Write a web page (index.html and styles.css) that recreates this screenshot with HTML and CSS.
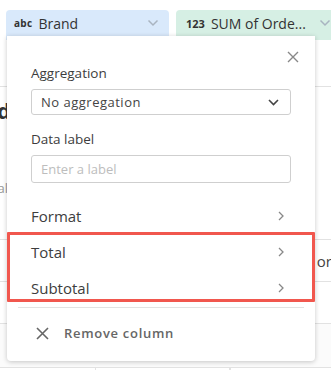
FILE: index.html
```html
<html><head><title>Column settings</title>
<link rel="stylesheet" href="styles.css">
</head>
<body>
<div class="sheet">
  <div class="columns-bar">
    <div class="pill pill-text">
      <span class="type-tag">abc</span>
      <span class="pill-name">Brand</span>
      <svg class="pill-caret" width="12" height="8" viewBox="0 0 12 8"><path d="M1.5 1.5 L6 6 L10.5 1.5" fill="none" stroke="#a9b4c0" stroke-width="1.5"/></svg>
    </div>
    <div class="pill pill-number">
      <span class="type-tag">123</span>
      <span class="pill-name">SUM of Orde...</span>
      <svg class="pill-caret" width="12" height="8" viewBox="0 0 12 8"><path d="M1.5 1.5 L6 6 L10.5 1.5" fill="none" stroke="#a9b4c0" stroke-width="1.5"/></svg>
    </div>
  </div>

  <div class="grid">
    <div class="row row-head"></div>
    <div class="row row-title">
      <span class="title-text">Brand</span>
      <span class="sub-text">Total</span>
    </div>
    <div class="row row-data">
      <div class="cell-end"><span>Vendor</span></div>
    </div>
    <div class="row row-data"></div>
    <div class="row row-data row-shade"></div>
    <div class="row row-cols">
      <div class="col"></div>
      <div class="col"></div>
      <div class="col"></div>
    </div>
  </div>

  <div class="popup">
    <button class="close-btn">
      <svg width="12" height="12" viewBox="0 0 12 12"><path d="M1 1 L11 11 M11 1 L1 11" stroke="#888" stroke-width="1.4"/></svg>
    </button>

    <div class="field">
      <div class="field-label">Aggregation</div>
      <div class="select-box">
        <span>No aggregation</span>
        <svg width="11" height="7" viewBox="0 0 11 7"><path d="M1 1 L5.5 5.5 L10 1" fill="none" stroke="#444" stroke-width="1.6"/></svg>
      </div>
    </div>

    <div class="field">
      <div class="field-label">Data label</div>
      <input class="text-input" placeholder="Enter a label">
    </div>

    <div class="menu">
      <div class="menu-item">
        <span>Format</span>
        <svg width="6" height="10" viewBox="0 0 6 10"><path d="M1 1 L5 5 L1 9" fill="none" stroke="#888" stroke-width="1.3"/></svg>
      </div>
      <div class="highlight">
        <div class="menu-item">
          <span>Total</span>
          <svg width="6" height="10" viewBox="0 0 6 10"><path d="M1 1 L5 5 L1 9" fill="none" stroke="#888" stroke-width="1.3"/></svg>
        </div>
        <div class="menu-item">
          <span>Subtotal</span>
          <svg width="6" height="10" viewBox="0 0 6 10"><path d="M1 1 L5 5 L1 9" fill="none" stroke="#888" stroke-width="1.3"/></svg>
        </div>
      </div>
    </div>

    <div class="divider"></div>

    <div class="remove-row">
      <svg width="13" height="13" viewBox="0 0 13 13"><path d="M1 1 L12 12 M12 1 L1 12" stroke="#666" stroke-width="1.6"/></svg>
      <span>Remove column</span>
    </div>
  </div>
</div>
</body></html>
```

FILE: styles.css
```css
body {
  margin: 0;
  background: #fff;
  font-family: 'Open Sans', sans-serif;
  color: #3d3d3d;
  overflow: hidden;
}
.sheet {
  position: relative;
  width: 331px;
  height: 370px;
  overflow: hidden;
}
.columns-bar {
  display: flex;
  gap: 7px;
  padding: 10px 0 0 6px;
}
.pill {
  display: flex;
  align-items: center;
  height: 30px;
  padding: 0 10px 4px 8px;
  border-radius: 4px 4px 0 0;
  flex-shrink: 0;
  box-sizing: border-box;
}
.pill-text {
  width: 163px;
  background: #d9e9fb;
}
.pill-number {
  width: 165px;
  background: #d6efe4;
  padding-left: 10px;
}
.type-tag {
  font-size: 11px;
  font-weight: 700;
  color: #333;
  margin-right: 6px;
}
.pill-text .type-tag {
  font-size: 10px;
  letter-spacing: 0.3px;
}
.pill-name {
  font-size: 14px;
  color: #333;
  flex: 1;
  white-space: nowrap;
}
.pill-caret {
  margin-left: 8px;
}
.grid {
  display: flex;
  flex-direction: column;
}
.row {
  border-bottom: 1px solid #e2e2e2;
  box-sizing: border-box;
  display: flex;
}
.row-head {
  height: 47px;
}
.row-title {
  height: 153px;
  flex-direction: column;
  padding-top: 10px;
}
.title-text {
  font-size: 21px;
  font-weight: 700;
  color: #333;
  margin-left: -53px;
}
.sub-text {
  font-size: 13px;
  color: #999;
  margin-left: -22px;
  margin-top: 54px;
}
.row-data {
  height: 42px;
  align-items: center;
  justify-content: flex-end;
}
.row-shade {
  height: 44px;
  background: #fbfbfb;
}
.cell-end {
  width: 15px;
  overflow: hidden;
  display: flex;
  justify-content: flex-end;
  white-space: nowrap;
  font-size: 15px;
  color: #444;
  margin-right: -1px;
}
.cell-end span {
  flex-shrink: 0;
}
.row-cols {
  height: 40px;
  border-bottom: none;
}
.col {
  border-right: 1px solid #e2e2e2;
}
.col:nth-child(1) { width: 95px; }
.col:nth-child(2) { width: 133px; }

.popup {
  position: absolute;
  left: 7px;
  top: 36px;
  width: 308px;
  height: 325px;
  background: #fff;
  border-radius: 0 0 4px 4px;
  box-shadow: 0 1px 5px rgba(0,0,0,0.22);
  box-sizing: border-box;
  padding-top: 28px;
}
.close-btn {
  position: absolute;
  right: 16px;
  top: 15px;
  border: none;
  background: none;
  padding: 0;
  width: 12px;
  height: 12px;
  display: flex;
}
.field {
  padding: 0 24px;
  margin-bottom: 15px;
}
.field-label {
  font-size: 13.5px;
  line-height: 18px;
  color: #3d3d3d;
  margin-bottom: 7px;
}
.select-box {
  height: 26px;
  border: 1px solid #cfcfcf;
  border-radius: 3px;
  box-sizing: border-box;
  display: flex;
  align-items: center;
  justify-content: space-between;
  padding: 0 11px 0 9px;
  font-size: 13px;
  letter-spacing: 0.5px;
  color: #444;
}
.text-input {
  display: block;
  width: 100%;
  height: 28px;
  border: 1px solid #cfcfcf;
  border-radius: 3px;
  box-sizing: border-box;
  padding: 0 9px;
  font-family: 'Open Sans', sans-serif;
  font-size: 13px;
  outline: none;
}
.text-input::placeholder {
  color: #bdbdbd;
}
.menu-item {
  height: 36px;
  display: flex;
  align-items: center;
  justify-content: space-between;
  padding: 0 31px 0 24px;
  font-size: 15px;
  color: #3d3d3d;
}
.highlight {
  position: relative;
}
.highlight::after {
  content: '';
  position: absolute;
  left: 0;
  right: 0;
  top: -2px;
  bottom: 4px;
  border: 3px solid #f1574e;
  border-radius: 1px;
}
.divider {
  height: 1px;
  background: #e2e2e2;
  margin: 1px 11px 0 11px;
}
.remove-row {
  display: flex;
  align-items: center;
  height: 50px;
  padding-left: 29px;
  gap: 15px;
  font-size: 13px;
  font-weight: 600;
  letter-spacing: 0.7px;
  color: #666;
}
```
